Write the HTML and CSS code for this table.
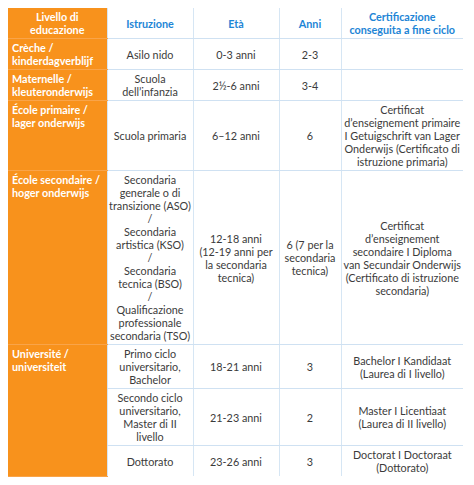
FILE: index.html
```html
<!DOCTYPE html>
<html lang="it">
<head>
<meta charset="utf-8">
<title>Livelli di educazione</title>
<link rel="stylesheet" href="styles.css">
</head>
<body>
<table class="edu">
  <colgroup>
    <col class="c-level">
    <col class="c-istr">
    <col class="c-eta">
    <col class="c-anni">
    <col class="c-cert">
  </colgroup>
  <thead>
    <tr>
      <th class="level head-level">Livello di<br>educazione</th>
      <th>Istruzione</th>
      <th>Età</th>
      <th>Anni</th>
      <th>Certificazione<br>conseguita a fine ciclo</th>
    </tr>
  </thead>
  <tbody>
    <tr>
      <th class="level">Crèche /<br>kinderdagverblijf</th>
      <td>Asilo nido</td>
      <td>0-3 anni</td>
      <td>2-3</td>
      <td></td>
    </tr>
    <tr>
      <th class="level">Maternelle /<br>kleuteronderwijs</th>
      <td>Scuola<br>dell’infanzia</td>
      <td>2½-6 anni</td>
      <td>3-4</td>
      <td></td>
    </tr>
    <tr>
      <th class="level">École primaire /<br>lager onderwijs</th>
      <td>Scuola primaria</td>
      <td>6–12 anni</td>
      <td>6</td>
      <td>Certificat<br>d’enseignement primaire<br>I Getuigschrift van Lager<br>Onderwijs (Certificato di<br>istruzione primaria)</td>
    </tr>
    <tr>
      <th class="level">École secondaire /<br>hoger onderwijs</th>
      <td>Secondaria<br>generale o di<br>transizione (ASO)<br>/<br>Secondaria<br>artistica (KSO)<br>/<br>Secondaria<br>tecnica (BSO)<br>/<br>Qualificazione<br>professionale<br>secondaria (TSO)</td>
      <td>12-18 anni<br>(12-19 anni per<br>la secondaria<br>tecnica)</td>
      <td>6 (7 per la<br>secondaria<br>tecnica)</td>
      <td>Certificat<br>d’enseignement<br>secondaire I Diploma<br>van Secundair Onderwijs<br>(Certificato di istruzione<br>secondaria)</td>
    </tr>
    <tr>
      <th class="level" rowspan="3">Université /<br>universiteit</th>
      <td>Primo ciclo<br>universitario,<br>Bachelor</td>
      <td>18-21 anni</td>
      <td>3</td>
      <td>Bachelor I Kandidaat<br>(Laurea di I livello)</td>
    </tr>
    <tr>
      <td>Secondo ciclo<br>universitario,<br>Master di II<br>livello</td>
      <td>21-23 anni</td>
      <td>2</td>
      <td>Master I Licentiaat<br>(Laurea di II livello)</td>
    </tr>
    <tr class="last">
      <td>Dottorato</td>
      <td>23-26 anni</td>
      <td>3</td>
      <td>Doctorat I Doctoraat<br>(Dottorato)</td>
    </tr>
  </tbody>
</table>
</body>
</html>
```

FILE: styles.css
```css
html, body {
  margin: 0;
  padding: 0;
  background: #ffffff;
}

body {
  padding: 8px;
  font-family: "Lato", "Open Sans", sans-serif;
  font-size: 10.8px;
  line-height: 13px;
  color: #3b3b3b;
}

.edu {
  border-collapse: collapse;
  table-layout: fixed;
  width: 455px;
}

.c-level { width: 99px; }
.c-istr { width: 86px; }
.c-eta { width: 86px; }
.c-anni { width: 62px; }
.c-cert { width: 122px; }

.edu th,
.edu td {
  padding: 2px 0;
  height: 26px;
  text-align: center;
  vertical-align: middle;
  white-space: nowrap;
  border-bottom: 1px solid #cfe1f2;
  border-left: 1px solid #d6e6f4;
}

.edu thead th {
  color: #1d85d6;
  font-weight: 700;
}

.edu th.level {
  background: #f8921c;
  color: #ffffff;
  font-weight: 700;
  text-align: left;
  vertical-align: top;
  padding-left: 4px;
  border-left: none;
  border-bottom: 1px solid #f9a449;
}

.edu thead th.head-level {
  color: #ffffff;
  text-align: center;
  vertical-align: middle;
  padding-left: 0;
}

.edu tr.last td {
  border-bottom: none;
}

.edu tbody tr:last-child th.level {
  border-bottom: none;
}
```
